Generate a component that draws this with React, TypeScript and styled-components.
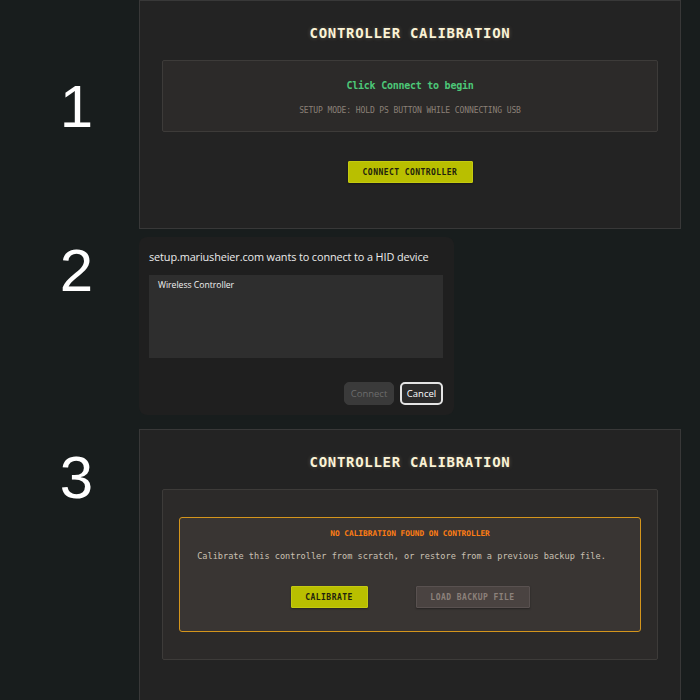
import React from 'react';
import styled, { createGlobalStyle } from 'styled-components';

const GlobalStyle = createGlobalStyle`
  html, body {
    margin: 0;
    padding: 0;
    background: #181d1d;
    height: 700px;
    overflow: hidden;
  }
`;

const mono = `"DejaVu Sans Mono", "Liberation Mono", monospace`;

const Page = styled.div`
  display: flex;
  flex-direction: column;
  width: 700px;
  height: 700px;
  overflow: hidden;
`;

const Step = styled.div<{ $gap: number }>`
  display: flex;
  align-items: flex-start;
  margin-bottom: ${({ $gap }) => $gap}px;
`;

const StepNumber = styled.div<{ $top: number }>`
  width: 139px;
  flex-shrink: 0;
  padding-top: ${({ $top }) => $top}px;
  padding-left: 14px;
  box-sizing: border-box;
  text-align: center;
  font-family: "Liberation Sans", Arial, sans-serif;
  font-size: 60px;
  line-height: 60px;
  color: #ffffff;
`;

const Panel = styled.section<{ $height: number }>`
  width: 542px;
  height: ${({ $height }) => $height}px;
  box-sizing: border-box;
  background: #232323;
  border: 1px solid #383838;
  display: flex;
  flex-direction: column;
  align-items: center;
  padding: 23px 22px 0;
`;

const Title = styled.h1`
  margin: 0;
  font-family: ${mono};
  font-weight: bold;
  font-size: 14px;
  line-height: 18px;
  letter-spacing: 0.7px;
  color: #fbf3d6;
  text-shadow: 0 0 4px rgba(255, 240, 200, 0.25);
`;

const InnerBox = styled.div<{ $pad: string }>`
  margin-top: 18px;
  width: 100%;
  box-sizing: border-box;
  background: #2c2a29;
  border: 1px solid #3d3b39;
  border-radius: 2px;
  padding: ${({ $pad }) => $pad};
  display: flex;
  flex-direction: column;
  align-items: center;
`;

const StatusText = styled.div`
  font-family: ${mono};
  font-weight: bold;
  font-size: 10px;
  line-height: 14px;
  letter-spacing: -0.25px;
  color: #4cc878;
`;

const HintText = styled.div`
  margin-top: 12px;
  font-family: ${mono};
  font-size: 8px;
  line-height: 12px;
  letter-spacing: -0.1px;
  color: #8b8077;
`;

const ActionButton = styled.button<{ $variant?: 'primary' | 'muted'; $width: number }>`
  width: ${({ $width }) => $width}px;
  height: 22px;
  padding: 0;
  border-radius: 1px;
  font-family: ${mono};
  font-weight: bold;
  font-size: 8px;
  letter-spacing: 0.45px;
  cursor: pointer;
  background: ${({ $variant }) => ($variant === 'muted' ? '#4a4341' : '#b9bf00')};
  color: ${({ $variant }) => ($variant === 'muted' ? '#8c817b' : '#22220e')};
  border: 1px solid ${({ $variant }) => ($variant === 'muted' ? '#595150' : '#c4ca10')};
  box-shadow: 0 1px 2px rgba(0, 0, 0, 0.35);
`;

const ConnectRow = styled.div`
  margin-top: 29px;
  display: flex;
  justify-content: center;
`;

/* browser HID chooser */

const Dialog = styled.div`
  width: 315px;
  height: 178px;
  box-sizing: border-box;
  background: #1f1f1f;
  border-radius: 8px;
  padding: 12px 11px 10px 10px;
  display: flex;
  flex-direction: column;
  font-family: "Open Sans", "Noto Sans", sans-serif;
`;

const DialogTitle = styled.div`
  font-size: 10.9px;
  line-height: 16px;
  letter-spacing: -0.12px;
  white-space: nowrap;
  color: #ececec;
`;

const DeviceList = styled.div`
  margin-top: 10px;
  height: 83px;
  background: #2e2e2e;
  padding: 4px 9px;
  box-sizing: border-box;
`;

const DeviceItem = styled.div`
  font-size: 8.6px;
  font-weight: 500;
  line-height: 12px;
  color: #f2f2f2;
`;

const DialogActions = styled.div`
  margin-top: auto;
  display: flex;
  justify-content: flex-end;
  gap: 6px;
`;

const DialogButton = styled.button<{ $disabled?: boolean; $width: number }>`
  width: ${({ $width }) => $width}px;
  height: 23px;
  padding: 0;
  border-radius: 5px;
  font-family: "Open Sans", "Noto Sans", sans-serif;
  font-size: 9.5px;
  box-sizing: border-box;
  background: ${({ $disabled }) => ($disabled ? '#3a3a3a' : '#2b2b2b')};
  color: ${({ $disabled }) => ($disabled ? '#6c6c6c' : '#ffffff')};
  border: ${({ $disabled }) => ($disabled ? '1px solid #3a3a3a' : '2px solid #e4e4e4')};
`;

/* missing calibration notice */

const Notice = styled.div`
  width: 100%;
  box-sizing: border-box;
  border: 1px solid #d4951c;
  border-radius: 3px;
  background: #393533;
  padding: 10px 0 23px;
  display: flex;
  flex-direction: column;
  align-items: center;
`;

const NoticeHeading = styled.div`
  font-family: ${mono};
  font-weight: bold;
  font-size: 7.8px;
  line-height: 12px;
  color: #ff7d14;
`;

const NoticeText = styled.div`
  margin-top: 10px;
  margin-right: 17px;
  font-family: ${mono};
  font-size: 8.6px;
  line-height: 12px;
  color: #c9c0b2;
`;

const NoticeActions = styled.div`
  margin-top: 24px;
  display: flex;
  gap: 48px;
`;

export default function App() {
  return (
    <>
      <GlobalStyle />
      <Page>
        <Step $gap={8}>
          <StepNumber $top={77}>1</StepNumber>
          <Panel $height={229}>
            <Title>CONTROLLER CALIBRATION</Title>
            <InnerBox $pad="18px 0 14px">
              <StatusText>Click Connect to begin</StatusText>
              <HintText>SETUP MODE: HOLD PS BUTTON WHILE CONNECTING USB</HintText>
            </InnerBox>
            <ConnectRow>
              <ActionButton $width={125}>CONNECT CONTROLLER</ActionButton>
            </ConnectRow>
          </Panel>
        </Step>

        <Step $gap={14}>
          <StepNumber $top={4}>2</StepNumber>
          <Dialog>
            <DialogTitle>setup.mariusheier.com wants to connect to a HID device</DialogTitle>
            <DeviceList>
              <DeviceItem>Wireless Controller</DeviceItem>
            </DeviceList>
            <DialogActions>
              <DialogButton $disabled $width={50}>Connect</DialogButton>
              <DialogButton $width={43}>Cancel</DialogButton>
            </DialogActions>
          </Dialog>
        </Step>

        <Step $gap={0}>
          <StepNumber $top={19}>3</StepNumber>
          <Panel $height={290}>
            <Title>CONTROLLER CALIBRATION</Title>
            <InnerBox $pad="27px 16px 27px">
              <Notice>
                <NoticeHeading>NO CALIBRATION FOUND ON CONTROLLER</NoticeHeading>
                <NoticeText>
                  Calibrate this controller from scratch, or restore from a previous backup file.
                </NoticeText>
                <NoticeActions>
                  <ActionButton $width={77}>CALIBRATE</ActionButton>
                  <ActionButton $variant="muted" $width={114}>
                    LOAD BACKUP FILE
                  </ActionButton>
                </NoticeActions>
              </Notice>
            </InnerBox>
          </Panel>
        </Step>
      </Page>
    </>
  );
}
